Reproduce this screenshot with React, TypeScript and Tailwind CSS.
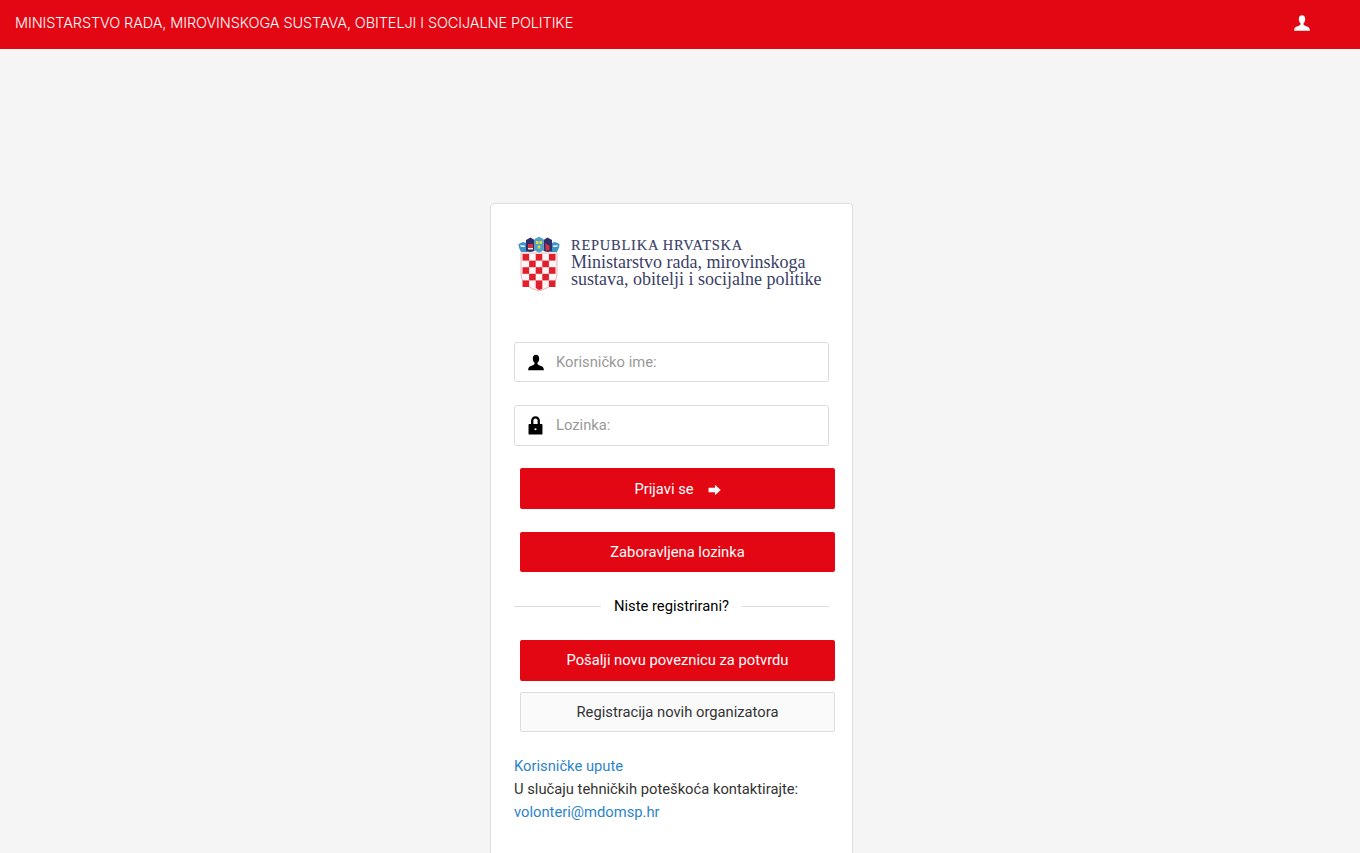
const RED = "bg-[#e30613]";

// glyphicon-style user silhouette
const UserIcon = ({ className }: { className: string }) => (
  <svg viewBox="0 0 16 16" className={className} fill="currentColor">
    <path d="M8 0.300C6 0.300 4.800 1.900 4.800 4.100c0 1.800.7 3.300 1.700 4.200v1.300c-.1.500-.9.900-2.200 1.400C2.600 11.600.6 12.300.3 14.200L.1 15.700h15.800l-.2-1.500c-.3-1.900-2.300-2.600-4-3.200-1.300-.5-2.100-.9-2.200-1.400V8.300c1-.9 1.700-2.400 1.700-4.200C11.200 1.900 10 .3 8 .3z" />
  </svg>
);

const LockIcon = ({ className }: { className: string }) => (
  <svg viewBox="0 0 14 18" className={className} fill="currentColor">
    <path
      fillRule="evenodd"
      d="M2.800 7.500V4.400C2.800 2 4.600.2 7 .2s4.200 1.800 4.200 4.200v3.100h1.500c.5 0 .9.400.9.900v8.300c0 .5-.4.900-.9.900H1.300c-.5 0-.9-.4-.9-.9V8.400c0-.5.4-.9.900-.9h1.500zm2.200 0h4V4.400C9 3.200 8.200 2.300 7 2.300s-2 .9-2 2.100v3.100zM7 11.500a1 1 0 100 2 1 1 0 000-2z"
    />
  </svg>
);

// glyphicon-style fat arrow
const ArrowIcon = ({ className }: { className: string }) => (
  <svg viewBox="0 0 14 12" className={className} fill="currentColor">
    <path d="M7.500.3L13.700 6 7.500 11.700V8.300H.6V3.700h6.900z" />
  </svg>
);

// croatian coat of arms, checkerboard shield with the crown of five small shields
const CoatOfArms = () => {
  const rows = [0, 1, 2, 3, 4];
  const cols = [0, 1, 2, 3, 4];
  return (
    <svg viewBox="0 0 42 56" className="w-[42px] h-[56px] shrink-0 -mt-[2px]">
      <path d="M3 38 V17 H39 V38 C39 47 31 52 21 55 C11 52 3 47 3 38 Z" fill="#fdf6f6" stroke="#e3b9b9" strokeWidth="1" />
      {rows.map((r) =>
        cols.map((c) =>
          (r + c) % 2 === 0 ? (
            <rect key={`${r}-${c}`} x={4.500 + c * 6.600} y={18 + r * 6.600} width={6.600} height={6.600} fill="#e2202c" />
          ) : null
        )
      )}
      <path d="M17.700 52 V51 h6.600 v2 L21 54 z" fill="#e2202c" />
      {/* crown */}
      <path d="M0.500 8 L5 6 L8.500 7 V16 H3 C1.500 13 .5 11 .5 8 Z" fill="#3f93c6" />
      <path d="M41.500 8 L37 6 L33.500 7 V16 H39 C40.500 13 41.500 11 41.500 8 Z" fill="#3f93c6" />
      <path d="M8 4 L12.500 1.500 L16.500 4 V15 L12.500 16 L8 15.500 Z" fill="#2b2f6b" />
      <path d="M25.500 4 L29.500 1.500 L34 4 V15.500 L29.500 16 L25.500 15 Z" fill="#2b2f6b" />
      <path d="M16.500 3 L21 .8 L25.500 3 V13 C25.500 15 23 16 21 16.500 C19 16 16.500 15 16.500 13 Z" fill="#4aa3c9" />
      <rect x="10" y="8" width="5" height="4" fill="#d8303c" />
      <rect x="10" y="12" width="5" height="1.500" fill="#e9e9e9" />
      <path d="M27.500 7 L31.500 10 V14.500 H27.500 Z" fill="#d8303c" />
      <rect x="18" y="5" width="2.500" height="3" fill="#e6d44a" />
      <rect x="21.500" y="5" width="2.500" height="3" fill="#e6d44a" />
      <rect x="19.700" y="9.500" width="2.600" height="3" fill="#e6d44a" />
      <path d="M2 9 L7 9.500 V11 L3 11 Z" fill="#d9edf5" />
      <path d="M40 9 L35 9.500 V11 L39 11 Z" fill="#d9edf5" />
    </svg>
  );
};

const Field = ({ icon, placeholder, h }: { icon: React.ReactNode; placeholder: string; h: string }) => (
  <div className={`flex items-center ${h} bg-white border border-[#dcdcdc] rounded-[3px]`}>
    <div className="w-[41px] flex justify-center text-black">{icon}</div>
    <span className="text-[14.750px] text-[#999]">{placeholder}</span>
  </div>
);

const PrimaryButton = ({ children, h }: { children: React.ReactNode; h: string }) => (
  <button className={`flex items-center justify-center w-[315px] ml-[6px] ${h} ${RED} text-white text-[14.750px] rounded-[2px]`}>
    {children}
  </button>
);

export default function App() {
  return (
    <div className="h-[853px] overflow-hidden bg-[#f5f5f5] font-['Roboto',sans-serif]">
      {/* Top bar */}
      <header className={`flex items-center justify-between h-[49px] ${RED} pl-[15px] pr-[50px] pb-[4px] text-white`}>
        <span className="font-['Inter',sans-serif] text-[14.500px] font-light tracking-[-0.11px]">
          MINISTARSTVO RADA, MIROVINSKOGA SUSTAVA, OBITELJI I SOCIJALNE POLITIKE
        </span>
        <UserIcon className="w-4 h-4" />
      </header>

      {/* Login card */}
      <main className="flex justify-center pt-[154px] pr-[17px]">
        <div className="w-[363px] h-[700px] bg-white border border-[#dfdfdf] rounded-[4px] pt-[31px] px-[23px]">
          <div className="flex items-center gap-[11px] pl-[4px] h-[60px]">
            <CoatOfArms />
            <div className="font-['Liberation_Serif',serif] text-[#3b3f66] leading-[17.500px] -mt-[4px]">
              <div className="text-[14.500px] leading-[15px] mb-px tracking-[0.75px] [-webkit-text-stroke:0.15px_#3b3f66]">REPUBLIKA HRVATSKA</div>
              <div className="text-[18px] whitespace-nowrap">Ministarstvo rada, mirovinskoga</div>
              <div className="text-[18px] whitespace-nowrap">sustava, obitelji i socijalne politike</div>
            </div>
          </div>

          <div className="mt-[47px]">
            <Field icon={<UserIcon className="w-[16px] h-[17px]" />} placeholder="Korisničko ime:" h="h-[40px]" />
          </div>
          <div className="mt-[23px]">
            <Field icon={<LockIcon className="w-[15px] h-[19px]" />} placeholder="Lozinka:" h="h-[41px]" />
          </div>

          <div className="mt-[22px]">
            <PrimaryButton h="h-[41px]">
              <span className="mt-px">Prijavi se</span>
              <ArrowIcon className="w-[13px] h-[12px] ml-[14px] mt-[2px]" />
            </PrimaryButton>
          </div>
          <div className="mt-[23px]">
            <PrimaryButton h="h-[40px]">Zaboravljena lozinka</PrimaryButton>
          </div>

          <div className="flex items-center gap-[13px] mt-[23px] h-[22px]">
            <div className="flex-1 h-px bg-[#dcdcdc]" />
            <span className="text-[14.750px] text-black">Niste registrirani?</span>
            <div className="flex-1 h-px bg-[#dcdcdc]" />
          </div>

          <div className="mt-[23px]">
            <PrimaryButton h="h-[41px]">Pošalji novu poveznicu za potvrdu</PrimaryButton>
          </div>
          <div className="mt-[11px]">
            <button className="w-[315px] ml-[6px] h-[40px] bg-[#fafafa] border border-[#dcdcdc] rounded-[2px] text-[14.750px] text-[#333]">
              Registracija novih organizatora
            </button>
          </div>

          <div className="mt-[23px] text-[14.750px] leading-[23px] text-[#333]">
            <a className="block text-[#2d84c9]">Korisničke upute</a>
            <div>U slučaju tehničkih poteškoća kontaktirajte:</div>
            <a className="block text-[#2d84c9]">volonteri@mdomsp.hr</a>
          </div>
        </div>
      </main>
    </div>
  );
}
